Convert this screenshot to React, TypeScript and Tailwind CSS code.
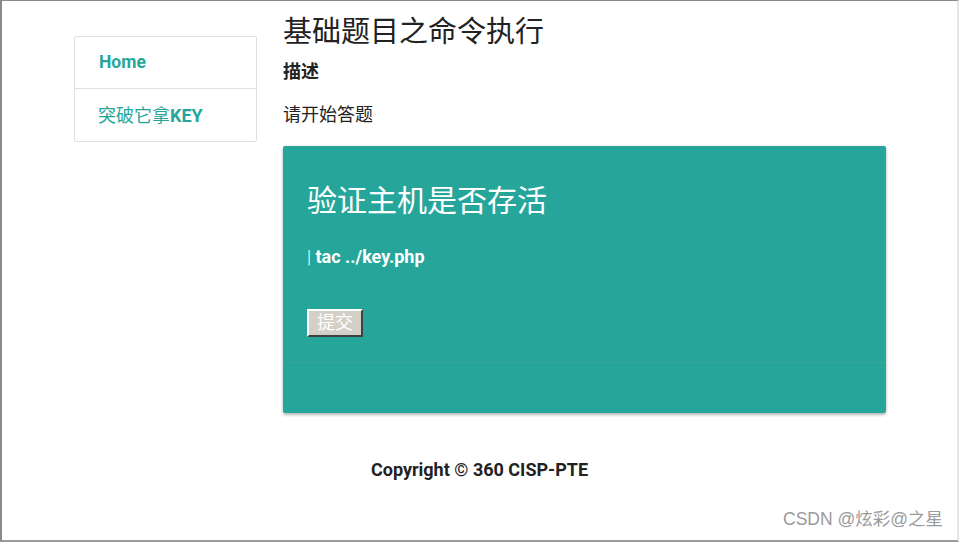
export default function App() {
  const cn = { fontFamily: 'Roboto, "Noto Sans CJK SC", sans-serif' };
  return (
    <div
      className="relative w-[959px] h-[542px] overflow-hidden bg-white border-t border-l-2 border-b-2 border-r-2 border-t-[#8a8a8a] border-l-[#8a8a8a] border-b-[#9a9a9a] border-r-[#e6e6e6]"
      style={cn}
    >
      <div className="flex items-start">
        <div className="ml-[72px] mt-[35px] w-[183px] border border-[#e0e0e0] rounded-[2px] bg-white">
          <div className="h-[52px] flex items-center pl-[24px] border-b border-[#e0e0e0] text-[17.5px] font-bold text-[#26a69a]">
            Home
          </div>
          <div className="h-[52px] flex items-center pl-[23px] text-[18px] text-[#26a69a]">
            突破它拿<span className="font-bold">KEY</span>
          </div>
        </div>
        <div className="ml-[26px] w-[603px]">
          <h1 className="pt-[12px] text-[29px] leading-[38px] text-[#222]">基础题目之命令执行</h1>
          <div className="mt-[11px] text-[18px] leading-[20px] font-bold text-[#222]">描述</div>
          <p className="mt-[23px] text-[18px] leading-[20px] text-[#222]">请开始答题</p>
          <div className="mt-[21px] bg-[#26a69a] rounded-[2px] shadow-[0_2px_3px_rgba(0,0,0,0.25),0_0_4px_rgba(0,0,0,0.08)]">
            <div className="px-[24px] pt-[35px] pb-[25px] border-b border-[rgba(160,160,160,0.2)]">
              <div className="text-[30px] leading-[40px] text-white">验证主机是否存活</div>
              <div className="mt-[26px] text-[18px] leading-[20px] text-white">
                <span className="font-light">|</span> <span className="font-bold">tac ../key.php</span>
              </div>
              <button className="mt-[42px] w-[56px] h-[28px] bg-[#d4d0c8] text-white text-[18px] leading-none border-2 border-t-white border-l-white border-b-[#404040] border-r-[#404040]">
                提交
              </button>
            </div>
            <div className="h-[50px]" />
          </div>
        </div>
      </div>
      <div className="mt-[47px] text-center text-[18px] font-bold text-[#222] leading-[20px]">
        Copyright © 360 CISP-PTE
      </div>
      <div className="absolute right-[14px] bottom-[8px] text-[17.5px] text-[#9a9a9a]" style={{ fontFamily: '"Liberation Sans", "Noto Sans CJK SC", sans-serif' }}>
        CSDN @炫彩@之星
      </div>
    </div>
  );
}
